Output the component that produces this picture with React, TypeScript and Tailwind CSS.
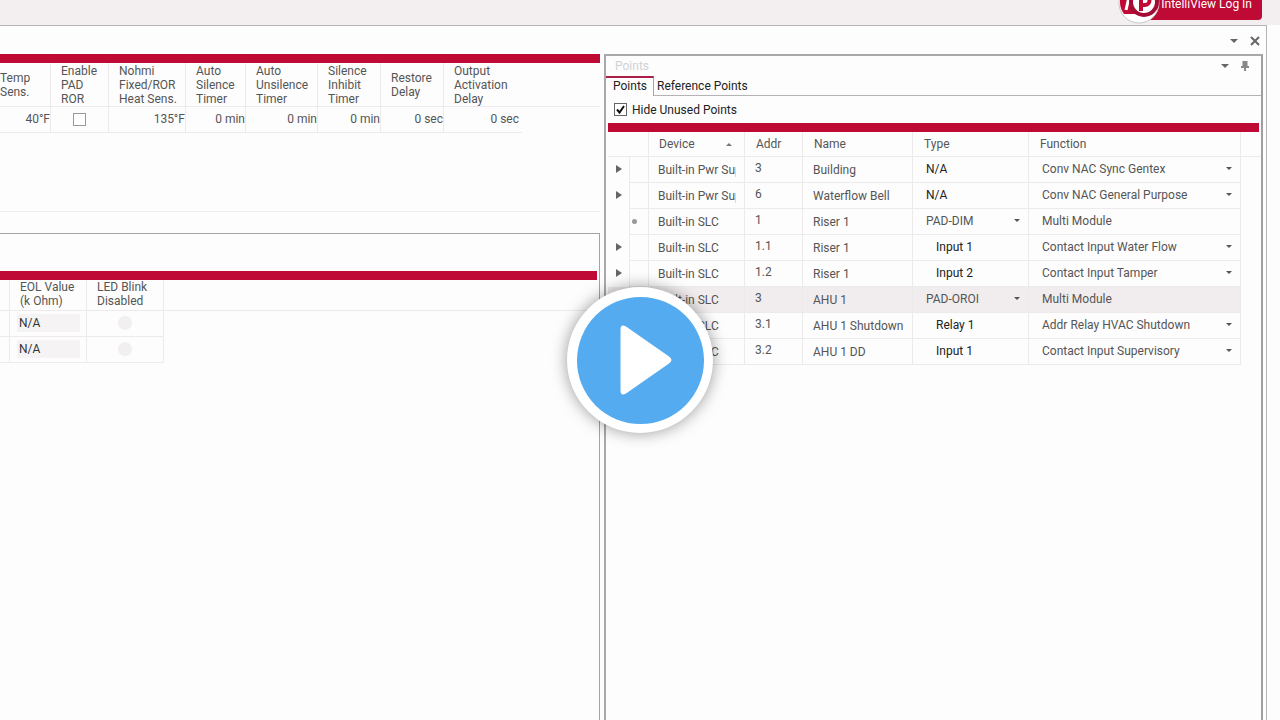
import { Fragment } from 'react'
import type { ReactNode } from 'react'

interface Point {
  marker?: 'expand' | 'dot'
  device: string
  addr: string
  name: string
  type: string
  typeKind: 'text' | 'select' | 'indent'
  fn: string
  fnSelect: boolean
  selected?: boolean
}

const POINTS: Point[] = [
  { marker: 'expand', device: 'Built-in Pwr Supply', addr: '3', name: 'Building', type: 'N/A', typeKind: 'text', fn: 'Conv NAC Sync Gentex', fnSelect: true },
  { marker: 'expand', device: 'Built-in Pwr Supply', addr: '6', name: 'Waterflow Bell', type: 'N/A', typeKind: 'text', fn: 'Conv NAC General Purpose', fnSelect: true },
  { marker: 'dot', device: 'Built-in SLC', addr: '1', name: 'Riser 1', type: 'PAD-DIM', typeKind: 'select', fn: 'Multi Module', fnSelect: false },
  { marker: 'expand', device: 'Built-in SLC', addr: '1.1', name: 'Riser 1', type: 'Input 1', typeKind: 'indent', fn: 'Contact Input Water Flow', fnSelect: true },
  { marker: 'expand', device: 'Built-in SLC', addr: '1.2', name: 'Riser 1', type: 'Input 2', typeKind: 'indent', fn: 'Contact Input Tamper', fnSelect: true },
  { device: 'Built-in SLC', addr: '3', name: 'AHU 1', type: 'PAD-OROI', typeKind: 'select', fn: 'Multi Module', fnSelect: false, selected: true },
  { device: 'Built-in SLC', addr: '3.1', name: 'AHU 1 Shutdown', type: 'Relay 1', typeKind: 'indent', fn: 'Addr Relay HVAC Shutdown', fnSelect: true },
  { device: 'Built-in SLC', addr: '3.2', name: 'AHU 1 DD', type: 'Input 1', typeKind: 'indent', fn: 'Contact Input Supervisory', fnSelect: true },
]

const TIMERS = [
  { lines: ['Auto', 'Silence', 'Timer'], value: '0 min' },
  { lines: ['Auto', 'Unsilence', 'Timer'], value: '0 min' },
  { lines: ['Silence', 'Inhibit', 'Timer'], value: '0 min' },
  { lines: ['Restore', 'Delay'], value: '0 sec' },
  { lines: ['Output', 'Activation', 'Delay'], value: '0 sec' },
]

function Lines({ lines }: { lines: string[] }) {
  return (
    <>
      {lines.map((line, i) => (
        <Fragment key={line}>
          {i > 0 && <br />}
          {line}
        </Fragment>
      ))}
    </>
  )
}

function Caret({ className = 'h-1 w-2' }: { className?: string }) {
  return (
    <svg viewBox="0 0 8 4" className={`shrink-0 ${className}`} aria-hidden="true">
      <path d="M0 0h8L4 4z" fill="currentColor" />
    </svg>
  )
}

function CellSelect({ label, value }: { label: string; value: string }) {
  return (
    <div className="relative flex items-center">
      <select
        aria-label={label}
        defaultValue={value}
        className="w-full appearance-none bg-transparent leading-4 outline-none"
      >
        <option>{value}</option>
      </select>
      <Caret className="pointer-events-none absolute right-1 h-[3px] w-1.5 text-[#555]" />
    </div>
  )
}

function Th({ children, className = '' }: { children?: ReactNode; className?: string }) {
  return (
    <th scope="col" className={`border-r border-b border-[#eceaeb] p-0 text-left font-normal ${className}`}>
      {children}
    </th>
  )
}

function SystemTable() {
  return (
    <section className="h-[158px] shrink-0 border-b border-[#f0eeef]">
      <div className="h-[9px] bg-[#be0a35]" />
      <table className="w-full table-fixed border-separate border-spacing-0 leading-[14px]">
        <colgroup>
          <col className="w-[51px]" />
          <col className="w-[58px]" />
          <col className="w-[77px]" />
          <col className="w-[60px]" />
          <col className="w-[72px]" />
          <col className="w-[63px]" />
          <col className="w-[63px]" />
          <col className="w-[78px]" />
          <col />
        </colgroup>
        <thead>
          <tr className="h-11">
            <Th>Temp<br />Sens.</Th>
            <Th className="pl-[10px]"><Lines lines={['Enable', 'PAD', 'ROR']} /></Th>
            <Th className="pl-[10px]"><Lines lines={['Nohmi', 'Fixed/ROR', 'Heat Sens.']} /></Th>
            {TIMERS.map((t, i) => (
              <Th key={i} className={`pl-[10px] ${i === 4 ? 'border-r-0' : ''}`}>
                <Lines lines={t.lines} />
              </Th>
            ))}
            <Th className="border-r-0" />
          </tr>
        </thead>
        <tbody>
          <tr className="h-[26px] text-right">
            <td className="border-r border-b border-[#eceaeb] pb-[2px]">40°F</td>
            <td className="border-r border-b border-[#eceaeb]">
              <input
                type="checkbox"
                aria-label="Enable PAD ROR"
                className="mx-auto block size-[13px] appearance-none border border-[#999] bg-white"
              />
            </td>
            <td className="border-r border-b border-[#eceaeb] pb-[2px]">135°F</td>
            {TIMERS.map((t, i) => (
              <td key={i} className={`border-b border-[#eceaeb] pb-[2px] ${i === 4 ? 'pr-[3px]' : 'border-r'}`}>
                {t.value}
              </td>
            ))}
            <td />
          </tr>
        </tbody>
      </table>
    </section>
  )
}

function CircuitTable() {
  return (
    <section className="mt-[21px] flex-1 border-t border-r border-[#a5a3a4] pt-[37px] pr-[2px]">
      <div className="h-[9px] bg-[#be0a35]" />
      <table className="w-full table-fixed border-separate border-spacing-0 leading-[14px]">
        <colgroup>
          <col className="w-[10px]" />
          <col className="w-[77px]" />
          <col className="w-[77px]" />
          <col />
        </colgroup>
        <thead>
          <tr className="h-[31px]">
            <Th />
            <Th className="pb-[2px] pl-[10px]">EOL Value<br />(k Ohm)</Th>
            <Th className="pb-[2px] pl-[10px]">LED Blink<br />Disabled</Th>
            <Th className="border-r-0" />
          </tr>
        </thead>
        <tbody>
          {[1, 2].map((row) => (
            <tr key={row} className="h-[26px] text-[#333]">
              <td className="border-r border-b border-[#eceaeb]" />
              <td className="border-r border-b border-[#eceaeb] pr-[6px] pb-[2px] pl-[7px]">
                <div className="h-[18px] bg-[#f5f3f4] pl-[2px] leading-[18px]">N/A</div>
              </td>
              <td className="border-r border-b border-[#eceaeb] pb-[2px]">
                <input
                  type="checkbox"
                  disabled
                  aria-label="LED blink disabled"
                  className="mx-auto block size-[14px] appearance-none rounded-full bg-[#f1eff0]"
                />
              </td>
              <td />
            </tr>
          ))}
        </tbody>
      </table>
    </section>
  )
}

function PointRow({ point }: { point: Point }) {
  const cell = 'border-r border-b border-[#eceaeb]'
  return (
    <tr className={`h-[26px] ${point.selected ? 'bg-[#f1edef]' : ''}`}>
      <td className="border-r border-[#eceaeb] pb-[2px]">
        {point.marker === 'expand' && (
          <button type="button" aria-label="Expand row" className="ml-2 block">
            <svg viewBox="0 0 6 8" className="h-2 w-1.5">
              <path d="M0 0l6 4-6 4z" fill="#666" />
            </svg>
          </button>
        )}
      </td>
      <td className={cell}>
        {point.marker === 'dot' && <span className="ml-[2px] block size-[5px] rounded-full bg-[#999]" />}
      </td>
      <td className={`${cell} pr-2 pl-[9px]`}>
        <div className="overflow-hidden whitespace-nowrap">{point.device}</div>
      </td>
      <td className={`${cell} pb-[3px] pl-[10px]`}>{point.addr}</td>
      <td className={`${cell} pl-[10px] whitespace-nowrap`}>{point.name}</td>
      <td className={`${cell} pr-1 pb-[2px] ${point.typeKind === 'indent' ? 'pl-[23px]' : 'pl-[13px]'}`}>
        {point.typeKind === 'select' ? (
          <CellSelect label="Type" value={point.type} />
        ) : (
          <span className="text-[#222]">{point.type}</span>
        )}
      </td>
      <td className={`${cell} pr-1 pb-[2px] pl-[13px]`}>
        {point.fnSelect ? <CellSelect label="Function" value={point.fn} /> : point.fn}
      </td>
      <td className="bg-[#fdfdfd]" />
    </tr>
  )
}

function PointsPanel() {
  return (
    <section className="flex min-w-0 flex-col border-t-2 border-r-2 border-l-2 border-[#a9a7a8] border-r-[#a09e9f]">
      <header className="flex h-[20px] shrink-0 items-center pr-3 pl-[9px]">
        <h2 className="flex-1 text-[#d3d1d2]">Points</h2>
        <button type="button" aria-label="Panel menu" className="mr-3 text-[#666]">
          <Caret />
        </button>
        <button type="button" aria-label="Pin panel">
          <svg viewBox="0 0 8 10" className="h-[10px] w-2" fill="#888">
            <path d="M1.500 0h5v5H8v2H5v3H3V7H0V5h1.500z" />
          </svg>
        </button>
      </header>
      <div className="flex h-5 shrink-0 text-[#222]" role="tablist">
        <button type="button" role="tab" aria-selected="true" className="border-t-2 border-r border-t-[#a92048] border-r-[#a5a3a4] pr-[6px] pb-[2px] pl-[7px]">
          Points
        </button>
        <button type="button" role="tab" aria-selected="false" className="flex-1 border-b border-[#b5b3b4] pl-[3px] text-left">
          Reference Points
        </button>
      </div>
      <label className="flex h-[27px] shrink-0 items-center gap-[5px] pl-2 text-[#222]">
        <span className="grid">
          <input
            type="checkbox"
            defaultChecked
            className="peer col-start-1 row-start-1 size-[13px] appearance-none border border-[#666] bg-white"
          />
          <svg viewBox="0 0 13 13" className="pointer-events-none invisible col-start-1 row-start-1 size-[13px] peer-checked:visible">
            <path d="M3 6.500l2.500 3L10 3" fill="none" stroke="#111" strokeWidth="2" />
          </svg>
        </span>
        Hide Unused Points
      </label>
      <div className="mr-[2px] ml-[2px] h-[9px] shrink-0 bg-[#be0a35]" />
      <div className="pl-[2px]">
        <table className="w-full table-fixed border-separate border-spacing-0 leading-4">
          <colgroup>
            <col className="w-[22px]" />
            <col className="w-[19px]" />
            <col className="w-[96px]" />
            <col className="w-[58px]" />
            <col className="w-[110px]" />
            <col className="w-[116px]" />
            <col className="w-[212px]" />
            <col />
          </colgroup>
          <thead>
            <tr className="h-[25px]">
              <Th className="border-r-0" />
              <Th />
              <Th className="pr-3 pl-[10px]">
                <span className="flex items-center justify-between">
                  Device
                  <Caret className="h-[3px] w-1.5 rotate-180 text-[#777]" />
                </span>
              </Th>
              <Th className="pl-[11px]">Addr</Th>
              <Th className="pl-[11px]">Name</Th>
              <Th className="pl-[11px]">Type</Th>
              <Th className="pl-[11px]">Function</Th>
              <Th className="border-r-0" />
            </tr>
          </thead>
          <tbody>
            {POINTS.map((point) => (
              <PointRow key={`${point.device}-${point.addr}`} point={point} />
            ))}
          </tbody>
        </table>
      </div>
    </section>
  )
}

function LoginButton() {
  return (
    <button type="button" className="-mt-[18px] mr-[18px] flex h-[42px] items-start text-white">
      <svg viewBox="0 0 42 42" className="relative z-10 -mr-[23px] size-[42px] shrink-0" aria-hidden="true">
        <circle cx="21" cy="21" r="20" fill="#fff" stroke="#c9c5c7" />
        <path d="M2 15l16-3 5 20H6A20 20 0 012 21z" fill="#be0a35" />
        <path d="M11 15L8 28" stroke="#fff" strokeWidth="3" />
        <circle cx="26" cy="20" r="13" fill="#fff" stroke="#a30d35" strokeWidth="4" />
        <path d="M23 29V14h4a4 4 0 010 9h-4" fill="none" stroke="#be0a35" strokeWidth="4" />
      </svg>
      <span className="h-[38px] rounded-br-[4px] bg-[#be0a35] pt-[14px] pr-[10px] pl-6 leading-4">
        IntelliView Log In
      </span>
    </button>
  )
}

function PlayButton() {
  return (
    <button
      type="button"
      aria-label="Play video"
      className="absolute top-1/2 left-1/2 grid size-[146px] -translate-x-1/2 -translate-y-1/2 place-items-center rounded-full bg-white shadow-[0_0_16px_rgba(0,0,0,0.4)]"
    >
      <span className="grid size-[127px] place-items-center rounded-full bg-[#54abef]">
        <svg viewBox="0 0 127 127" className="size-[127px]" aria-hidden="true">
          <path d="M49 29.500L92 59.500Q97 63 92 66.500L49 96.500Q43.500 99.500 43.500 93.500V32.500Q43.500 26.500 49 29.500z" fill="#fff" />
        </svg>
      </span>
    </button>
  )
}

export default function App() {
  return (
    <div className="relative flex h-screen flex-col overflow-hidden bg-[#fdfdfd] font-['Roboto','Liberation_Sans',sans-serif] text-xs text-[#555]">
      <header className="flex h-[25px] shrink-0 justify-end bg-[#f3eff1]">
        <LoginButton />
      </header>
      <main className="mr-[13px] flex min-h-0 flex-1 flex-col border-t border-r border-[#b5b3b4] pr-[3px]">
        <div className="flex h-7 shrink-0 items-center justify-end gap-3 pt-[2px] pr-[3px] text-[#666]">
          <button type="button" aria-label="Window list">
            <Caret />
          </button>
          <button type="button" aria-label="Close">
            <svg viewBox="0 0 10 10" className="size-[10px]">
              <path d="M1 1l8 8M9 1l-8 8" stroke="currentColor" strokeWidth="2" />
            </svg>
          </button>
        </div>
        <div className="grid min-h-0 flex-1 grid-cols-[600fr_659fr] gap-1">
          <div className="flex min-w-0 flex-col">
            <SystemTable />
            <CircuitTable />
          </div>
          <PointsPanel />
        </div>
      </main>
      <PlayButton />
    </div>
  )
}
